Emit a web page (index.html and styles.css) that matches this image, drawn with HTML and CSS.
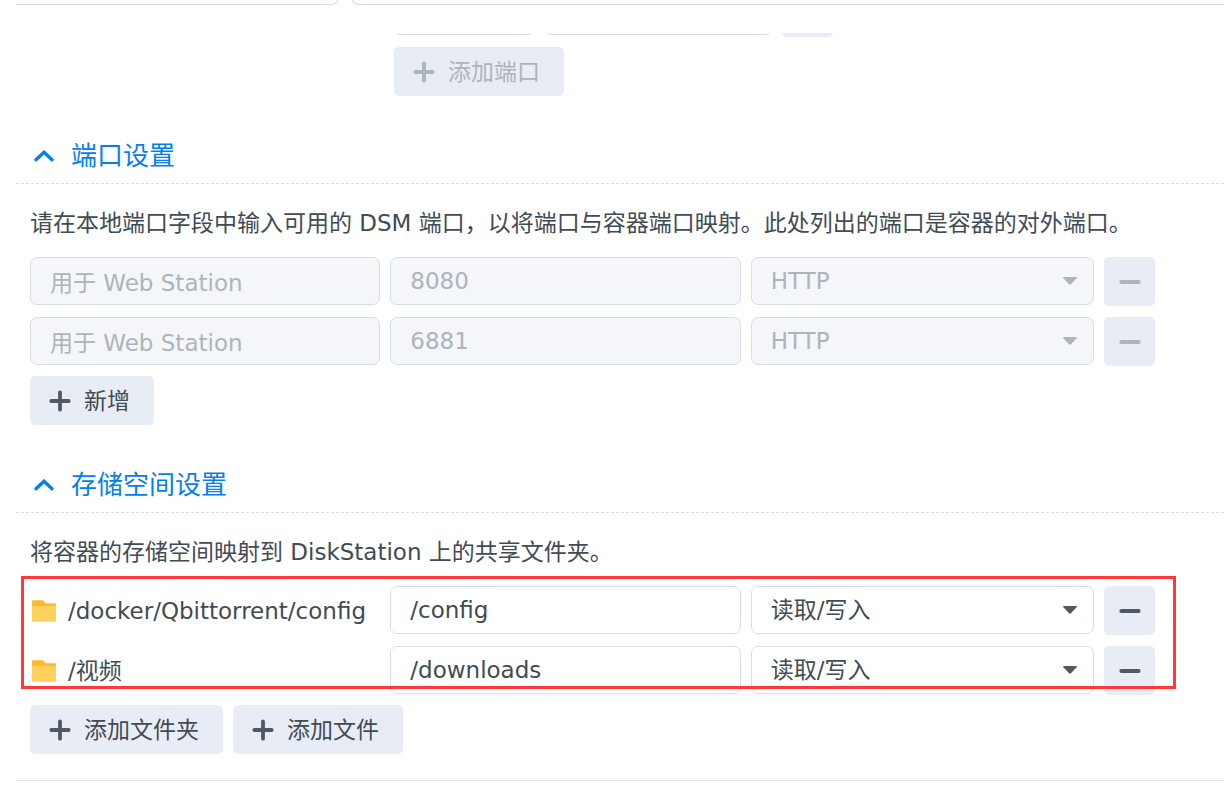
FILE: index.html
```
<!DOCTYPE html>
<html lang="zh-CN">
<head>
<meta charset="UTF-8">
<meta name="viewport" content="width=device-width, initial-scale=1.0">
<title>容器设置</title>
<link rel="stylesheet" href="styles.css">
</head>
<body>

<svg class="sprite" aria-hidden="true">
  <symbol id="plus" viewBox="0 0 22 22"><path d="M11 2.3v17.4M2.3 11h17.4" fill="none" stroke="currentColor" stroke-width="3.8" stroke-linecap="round"/></symbol>
  <symbol id="minus" viewBox="0 0 22 22"><path d="M2.3 11h17.4" fill="none" stroke="currentColor" stroke-width="3.8" stroke-linecap="round"/></symbol>
  <symbol id="chevron" viewBox="0 0 20 12"><path d="M2 9.7l8-7.4 8 7.4" fill="none" stroke="currentColor" stroke-width="3.4" stroke-linecap="round" stroke-linejoin="miter"/></symbol>
  <symbol id="arrow" viewBox="0 0 14 8"><path d="M.7 0h12.6q1 .5.3 1.3L8 7.3q-1 .9-2 0L.4 1.3Q-.3.5.7 0z" fill="currentColor"/></symbol>
  <symbol id="folder" viewBox="0 0 24 22"><path d="M0 1.5Q0 .3 1.2.3h9.4q.6 0 1 .5l2 2.4h9.2q1.2 0 1.2 1.2V10H0z" fill="#ffb92d"/><path d="M0 6h24v14.4q0 1.3-1.3 1.3H1.3Q0 21.7 0 20.4z" fill="#ffd05c"/></symbol>
</svg>

<main class="page">
  <div class="panels">
    <div class="panel panel-side"></div>
    <div class="panel panel-main"></div>
  </div>

  <div class="general">
    <div class="scrolled-row">
      <input class="field field-small" type="text" aria-label="本地端口">
      <input class="field field-medium" type="text" aria-label="容器端口">
      <button class="btn btn-icon" type="button" aria-label="删除"></button>
    </div>
    <button class="btn" type="button" disabled><svg class="icon"><use href="#plus"/></svg>添加端口</button>
  </div>

  <section class="section">
    <h2 class="section-title"><svg class="chevron"><use href="#chevron"/></svg>端口设置</h2>
    <div class="section-body">
      <p class="desc">请在本地端口字段中输入可用的 DSM 端口，以将端口与容器端口映射。此处列出的端口是容器的对外端口。</p>
      <div class="rows">
        <div class="row">
          <input class="field" type="text" value="用于 Web Station" aria-label="本地端口 1" disabled>
          <input class="field" type="text" value="8080" aria-label="容器端口 1" disabled>
          <div class="select">
            <select class="field" aria-label="协议 1" disabled><option>HTTP</option></select>
            <svg class="arrow"><use href="#arrow"/></svg>
          </div>
          <button class="btn btn-icon" type="button" aria-label="删除端口 1" disabled><svg class="icon"><use href="#minus"/></svg></button>
        </div>
        <div class="row">
          <input class="field" type="text" value="用于 Web Station" aria-label="本地端口 2" disabled>
          <input class="field" type="text" value="6881" aria-label="容器端口 2" disabled>
          <div class="select">
            <select class="field" aria-label="协议 2" disabled><option>HTTP</option></select>
            <svg class="arrow"><use href="#arrow"/></svg>
          </div>
          <button class="btn btn-icon" type="button" aria-label="删除端口 2" disabled><svg class="icon"><use href="#minus"/></svg></button>
        </div>
      </div>
      <div class="actions">
        <button class="btn" type="button"><svg class="icon"><use href="#plus"/></svg>新增</button>
      </div>
    </div>
  </section>

  <section class="section">
    <h2 class="section-title"><svg class="chevron"><use href="#chevron"/></svg>存储空间设置</h2>
    <div class="section-body">
      <p class="desc">将容器的存储空间映射到 DiskStation 上的共享文件夹。</p>
      <div class="rows marked">
        <div class="row">
          <label class="folder" for="mount1"><svg class="folder-icon"><use href="#folder"/></svg>/docker/Qbittorrent/config</label>
          <input class="field" id="mount1" type="text" value="/config">
          <div class="select">
            <select class="field" aria-label="权限 1"><option>读取/写入</option><option>只读</option></select>
            <svg class="arrow"><use href="#arrow"/></svg>
          </div>
          <button class="btn btn-icon" type="button" aria-label="删除文件夹 1"><svg class="icon"><use href="#minus"/></svg></button>
        </div>
        <div class="row">
          <label class="folder" for="mount2"><svg class="folder-icon"><use href="#folder"/></svg>/视频</label>
          <input class="field" id="mount2" type="text" value="/downloads">
          <div class="select">
            <select class="field" aria-label="权限 2"><option>读取/写入</option><option>只读</option></select>
            <svg class="arrow"><use href="#arrow"/></svg>
          </div>
          <button class="btn btn-icon" type="button" aria-label="删除文件夹 2"><svg class="icon"><use href="#minus"/></svg></button>
        </div>
      </div>
      <div class="actions">
        <button class="btn" type="button"><svg class="icon"><use href="#plus"/></svg>添加文件夹</button>
        <button class="btn" type="button"><svg class="icon"><use href="#plus"/></svg>添加文件</button>
      </div>
    </div>
  </section>
  <hr class="divider">
</main>

</body>
</html>
```
FILE: styles.css
```
* {
  box-sizing: border-box;
}
body {
  margin: 0;
  background: #fff;
  color: #414b55;
  font-family: Verdana, "DejaVu Sans", "Noto Sans CJK SC", sans-serif;
  font-size: 23px;
  line-height: 28px;
}
input, select, button {
  font: inherit;
  color: inherit;
}
.sprite {
  display: none;
}
.page {
  padding-left: 16px;
}

/* bottom edges of the panels above */
.panels {
  display: flex;
  gap: 12px;
  height: 5px;
  overflow: hidden;
  align-items: flex-end;
}
.panel {
  height: 20px;
  flex-shrink: 0;
  border: 1px solid #d3dfe9;
}
.panel-side {
  width: 323px;
  border-left: none;
  border-bottom-right-radius: 8px;
}
.panel-main {
  flex: 1;
  border-right: none;
  border-bottom-left-radius: 8px;
}

.general {
  margin-top: 28px;
  padding-left: 378px;
}
.scrolled-row {
  display: flex;
  align-items: flex-end;
  gap: 10px;
  height: 4px;
  margin-bottom: 10px;
  overflow: hidden;
}
.scrolled-row .field {
  margin-bottom: 2px;
}
.scrolled-row .field-small {
  width: 140px;
}
.scrolled-row .field-medium {
  width: 228px;
}

.section {
  margin-top: 36px;
}
.section-title {
  display: flex;
  align-items: center;
  height: 52px;
  margin: 0;
  padding: 0 0 4px 18px;
  border-bottom: 1px dashed #d6e0e8;
  color: #0580eb;
  font-size: 26px;
  font-weight: 400;
}
.chevron {
  width: 20px;
  height: 12px;
  margin-right: 17px;
}
.section-body {
  padding: 22px 69px 0 14px;
}
.desc {
  margin: 0 0 17px;
  line-height: 34px;
}

.rows {
  display: grid;
  gap: 11px;
}
.row {
  display: grid;
  grid-template-columns: 350fr 350fr 343fr 51px;
  gap: 10px;
}
.field {
  width: 100%;
  height: 48px;
  padding: 0 19px;
  border: 1px solid #d3dfe9;
  border-radius: 7px;
  background: #fff;
  appearance: none;
}
.field:focus {
  outline: none;
  border-color: #0580eb;
}
.field:disabled {
  background: #f4f6fa;
  color: #adb4ba;
  opacity: 1;
}
.select {
  position: relative;
}
.arrow {
  position: absolute;
  top: 20px;
  right: 17px;
  width: 14px;
  height: 8px;
  color: #505a64;
  pointer-events: none;
}
.field:disabled + .arrow {
  color: #adb4ba;
}

.btn {
  display: inline-flex;
  align-items: center;
  gap: 13px;
  height: 49px;
  padding: 0 24px 0 19px;
  border: none;
  border-radius: 5px;
  background: #e8edf5;
  white-space: nowrap;
  cursor: pointer;
}
.btn:hover {
  background: #dde5f0;
}
.btn:disabled {
  background: #e8edf5;
  color: #adb4ba;
  cursor: default;
}
.btn-icon {
  width: 51px;
  padding: 0;
  justify-content: center;
}
.icon {
  width: 22px;
  height: 22px;
  color: #505a64;
}
.btn:disabled .icon {
  color: #adb4ba;
}
.actions {
  display: flex;
  gap: 10px;
  margin-top: 10px;
}

.folder {
  display: flex;
  align-items: center;
  gap: 12px;
  padding-left: 2px;
  white-space: nowrap;
}
.folder-icon {
  width: 24px;
  height: 22px;
}

/* highlight frame over the mounted folders */
.marked {
  position: relative;
}
.marked::after {
  content: "";
  position: absolute;
  top: -10px;
  right: -21px;
  bottom: 6px;
  left: -9px;
  border: 3px solid #ff3838;
  pointer-events: none;
}

.divider {
  margin: 26px 0 0;
  border: none;
  border-top: 1px solid #dfe7ee;
}
```
